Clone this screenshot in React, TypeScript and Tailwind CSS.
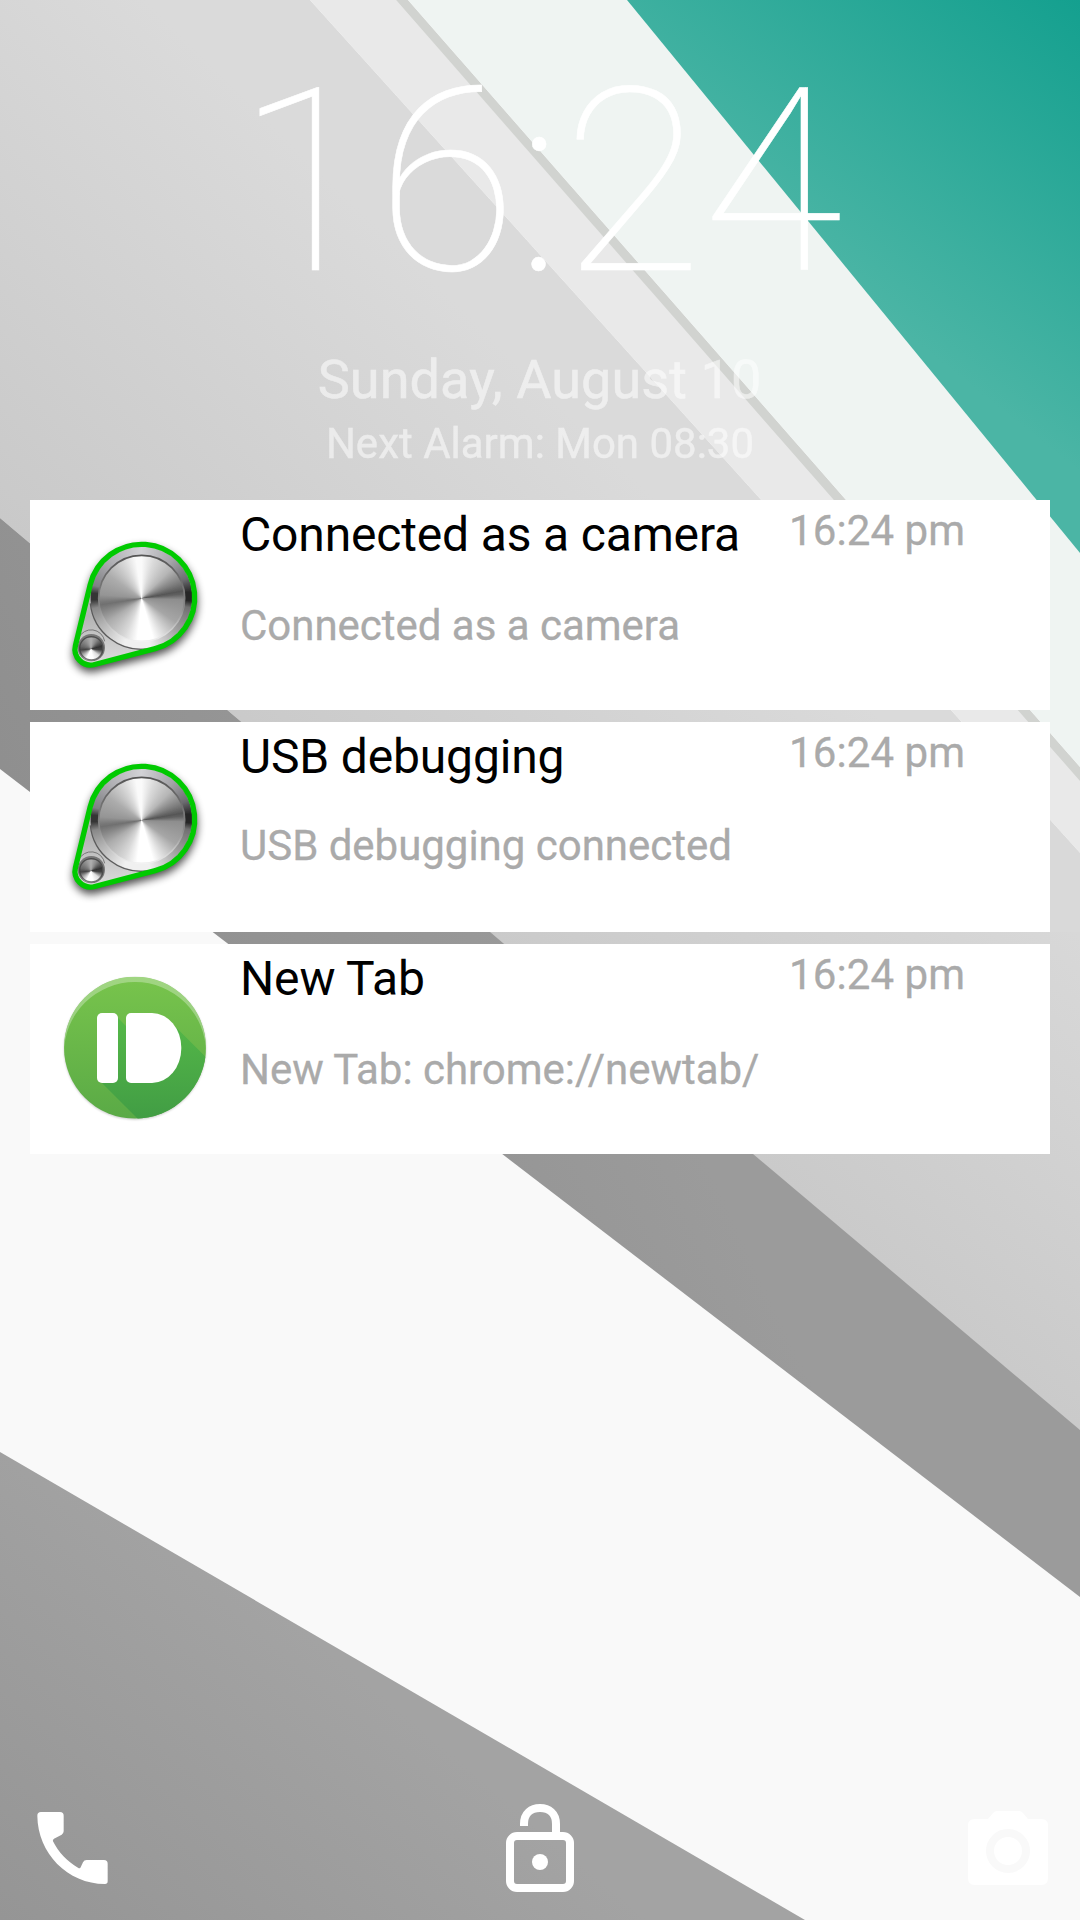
import React from "react";

function Wallpaper() {
  return (
    <svg className="absolute inset-0 h-[1920px] w-[1080px]" viewBox="0 0 1080 1920" aria-hidden="true">
      <defs>
        <linearGradient id="teal" gradientUnits="userSpaceOnUse" x1="1080" y1="0" x2="850" y2="290">
          <stop offset="0" stopColor="#14a08f" />
          <stop offset="1" stopColor="#4bb5a5" />
        </linearGradient>
        <linearGradient id="silver" gradientUnits="userSpaceOnUse" x1="0" y1="518" x2="330" y2="180">
          <stop offset="0" stopColor="#c9c9c9" />
          <stop offset="1" stopColor="#dadada" />
        </linearGradient>
        <linearGradient id="silverLow" gradientUnits="userSpaceOnUse" x1="700" y1="1110" x2="960" y2="800">
          <stop offset="0" stopColor="#cacaca" />
          <stop offset="1" stopColor="#d9d9d9" />
        </linearGradient>
        <linearGradient id="band" gradientUnits="userSpaceOnUse" x1="0" y1="760" x2="420" y2="560">
          <stop offset="0" stopColor="#8f8f8f" />
          <stop offset="1" stopColor="#9b9b9b" />
        </linearGradient>
        <linearGradient id="corner" gradientUnits="userSpaceOnUse" x1="0" y1="1920" x2="270" y2="1600">
          <stop offset="0" stopColor="#959595" />
          <stop offset="1" stopColor="#a3a3a3" />
        </linearGradient>
      </defs>
      <rect width="1080" height="1920" fill="#f9f9f9" />
      <polygon points="0,0 310,0 1080,853 1080,1430 0,518" fill="url(#silver)" />
      <polygon points="490,1100 1080,1100 1080,1430" fill="url(#silverLow)" />
      <polygon points="700,1100 490,932 1080,932 1080,1100" fill="url(#silverLow)" />
      <polygon points="1040,932 1040,809 1080,853 1080,932" fill="#d9d9d9" />
      <polygon points="310,0 396,0 1080,779 1080,853" fill="#e9e9e9" />
      <polygon points="396,0 408,0 1080,767 1080,781" fill="#d1d3d0" />
      <polygon points="408,0 627,0 1080,553 1080,767" fill="#eff4f2" />
      <polygon points="627,0 1080,0 1080,553" fill="url(#teal)" />
      <polygon points="0,518 1080,1430 1080,1597 0,769" fill="url(#band)" />
      <polygon points="0,1452 805,1920 0,1920" fill="url(#corner)" />
    </svg>
  );
}

const BELT = "M76.3 377 L120.5 194.6 A159 159 0 1 1 315.6 385.7 L134 433.4 A47 47 0 0 1 76.3 377 Z";

function KnobIcon({ id }: { id: string }) {
  return (
    <svg className="block size-[170px]" viewBox="0 0 510 510" aria-hidden="true">
      <defs>
        <filter id={`${id}-soft`} x="-20%" y="-20%" width="140%" height="140%">
          <feGaussianBlur stdDeviation="13" />
        </filter>
        <filter id={`${id}-edge`} x="-10%" y="-10%" width="120%" height="120%">
          <feGaussianBlur stdDeviation="2" />
        </filter>
        <linearGradient id={`${id}-plate`} x1="0" y1="0" x2="0" y2="1">
          <stop offset="0" stopColor="#c4c4c8" />
          <stop offset="0.6" stopColor="#b4b4b4" />
          <stop offset="1" stopColor="#dedede" />
        </linearGradient>
        <linearGradient id={`${id}-rim`} x1="0" y1="0" x2="0" y2="1">
          <stop offset="0" stopColor="#555" />
          <stop offset="0.6" stopColor="#888" />
          <stop offset="1" stopColor="#f2f2f2" />
        </linearGradient>
      </defs>
      <path d={BELT} transform="translate(1 14)" fill="#000" stroke="#000" strokeWidth="14" opacity="0.7" filter={`url(#${id}-soft)`} />
      <path d={BELT} fill={`url(#${id}-plate)`} />
      <g filter={`url(#${id}-edge)`}>
        <foreignObject x="121" y="79" width="306" height="306">
          <div className="size-[306px] rounded-full bg-[conic-gradient(#d2d2d6_0deg,#a4a4a8_40deg,#6c6c70_68deg,#262626_84deg,#262626_94deg,#707070_102deg,#a4a4a4_135deg,#f0f0f0_170deg,#f0f0f0_200deg,#b4b4b4_235deg,#888888_257deg,#363636_267deg,#363636_275deg,#808084_284deg,#b0b0b4_320deg,#d2d2d6_360deg)]" />
        </foreignObject>
        <path d="M121 250 A154 154 0 0 0 299 386" fill="none" stroke="#5c5c5c" strokeWidth="4" />
        <foreignObject x="145" y="105" width="260" height="260">
          <div className="size-[260px] rounded-full bg-[conic-gradient(#fafafa_0deg,#dadada_18deg,#b6b6b6_45deg,#808080_66deg,#565656_80deg,#606060_84deg,#8e8e8e_92deg,#a6a6a6_125deg,#dadada_148deg,#fff_164deg,#fff_186deg,#d8d8d8_205deg,#acacac_235deg,#707070_261deg,#787878_265deg,#959595_275deg,#acacac_305deg,#dadada_335deg,#fafafa_352deg,#fafafa_360deg)]" />
        </foreignObject>
        <circle cx="275" cy="235" r="129" fill="none" stroke={`url(#${id}-rim)`} strokeWidth="5" />
        <circle cx="124" cy="383" r="41" fill="#777" />
        <path d="M86 362 A41 41 0 0 1 164 372" fill="none" stroke="#777" strokeWidth="3" transform="translate(0 -8)" />
        <foreignObject x="88" y="352" width="70" height="70">
          <div className="size-[70px] rounded-full bg-[conic-gradient(#b0b0b0_0deg,#8a8a8a_30deg,#333_75deg,#444_95deg,#ddd_130deg,#fff_170deg,#fff_205deg,#aaa_235deg,#444_265deg,#666_285deg,#888_320deg,#b0b0b0_360deg)]" />
        </foreignObject>
        <circle cx="124" cy="385" r="35" fill="none" stroke="#3c3c3c" strokeWidth="4" opacity="0.7" />
        <path d={BELT} fill="none" stroke="#05ca05" strokeWidth="16" />
      </g>
    </svg>
  );
}

function BulletIcon() {
  return (
    <svg className="-mt-1 block size-[170px]" viewBox="0 0 510 510" aria-hidden="true">
      <defs>
        <linearGradient id="pb-face" x1="0" y1="0" x2="0" y2="1">
          <stop offset="0" stopColor="#78c44c" />
          <stop offset="1" stopColor="#5aaa46" />
        </linearGradient>
        <linearGradient id="pb-cast" x1="0" y1="0" x2="0" y2="1">
          <stop offset="0" stopColor="#55b848" />
          <stop offset="1" stopColor="#3f9a44" />
        </linearGradient>
        <clipPath id="pb-disc">
          <circle cx="255" cy="263" r="213" />
        </clipPath>
        <filter id="pb-soft" x="-10%" y="-10%" width="120%" height="120%">
          <feGaussianBlur stdDeviation="3" />
        </filter>
      </defs>
      <circle cx="255" cy="266" r="213" fill="#000" opacity="0.2" filter="url(#pb-soft)" />
      <g clipPath="url(#pb-disc)">
        <rect x="42" y="50" width="426" height="426" fill="url(#pb-face)" />
        <path d="M42 263 A213 213 0 0 1 468 263 L468 279 A213 213 0 0 0 42 279 Z" fill="#fff" opacity="0.3" />
        <path d="M146 359 L202 172 L230 200 L380 204 L510 334 L510 510 L297 510 Z" fill="url(#pb-cast)" />
      </g>
      <rect x="141" y="159" width="63" height="210" rx="15" fill="#fff" />
      <path d="M243 159 H306 A88 105 0 0 1 394 264 A88 105 0 0 1 306 369 H243 A15 15 0 0 1 228 354 V174 A15 15 0 0 1 243 159 Z" fill="#fff" />
    </svg>
  );
}

function PhoneIcon() {
  return (
    <svg className="h-[72px] w-[71px]" viewBox="111 96 213 216" fill="#fff" aria-hidden="true">
      <path d="M123 96 H180 Q191 96 191 107 V154 Q191 160 185 164 L162 176 Q157 179 159 184 C174 215 203 246 234 263 Q240 267 242 262 L249 247 Q252 240 260 240 H312 Q323 240 323 251 V304 Q323 312 315 312 C203 311 113 220 112 107 Q112 96 123 96 Z" />
    </svg>
  );
}

function UnlockIcon() {
  return (
    <svg className="h-[88px] w-[68px]" viewBox="78 72 204 264" aria-hidden="true">
      <path d="M132 138 V132 C132 99 154 84 180 84 C206 84 228 99 228 132 V160" fill="none" stroke="#fff" strokeWidth="24" />
      <rect x="90" y="168" width="180" height="156" rx="21" fill="none" stroke="#fff" strokeWidth="24" />
      <circle cx="180" cy="246" r="24" fill="#fff" />
    </svg>
  );
}

function CameraIcon() {
  return (
    <svg className="h-[74px] w-[80px]" viewBox="84 94 240 222" aria-hidden="true">
      <path d="M170 94 H238 Q244 94 248 99 L264 118 H304 Q324 118 324 138 V296 Q324 316 304 316 H104 Q84 316 84 296 V138 Q84 118 104 118 H144 L160 99 Q164 94 170 94 Z" fill="#fff" />
      <circle cx="204" cy="214" r="54" fill="none" stroke="#f9f9f9" strokeWidth="24" />
    </svg>
  );
}

type Notice = { icon: React.ReactNode; title: string; detail: string; time: string; tight?: boolean };

const notices: Notice[] = [
  { icon: <KnobIcon id="knob-a" />, title: "Connected as a camera", detail: "Connected as a camera", time: "16:24 pm" },
  { icon: <KnobIcon id="knob-b" />, title: "USB debugging", detail: "USB debugging connected", time: "16:24 pm", tight: true },
  { icon: <BulletIcon />, title: "New Tab", detail: "New Tab: chrome://newtab/", time: "16:24 pm" },
];

function NoticeCard({ icon, title, detail, time, tight }: Notice) {
  return (
    <article className="flex h-[210px] bg-white pl-5">
      <div className="w-[190px] shrink-0 pt-5">{icon}</div>
      <div className="flex w-[549px] flex-col pt-[7px]">
        <h2 className="text-[48px] leading-[56px] tracking-[-0.16px] whitespace-nowrap text-black">{title}</h2>
        <p className={`${tight ? "mt-[37px]" : "mt-[39px]"} text-[42px] leading-[48px] tracking-[-0.02px] whitespace-nowrap text-[#aaaaaa] [-webkit-text-stroke:0.3px_#aaaaaa]`}>{detail}</p>
      </div>
      <time className="pt-[7px] text-[42px] leading-[48px] tracking-[0.1px] whitespace-nowrap text-[#aaaaaa] [-webkit-text-stroke:0.3px_#aaaaaa]">{time}</time>
    </article>
  );
}

export default function App() {
  return (
    <main className="relative h-[1920px] w-[1080px] overflow-hidden font-['Roboto',sans-serif]">
      <Wallpaper />
      <div className="relative flex h-full flex-col">
        <header className="flex h-[500px] flex-col items-center pt-[33px] text-white">
          <h1 className="mr-px text-[256px] leading-[300px] font-thin [-webkit-text-stroke:0.5px_#fff]">16:24</h1>
          <p className="mt-[15px] mr-px text-[54px] leading-[64px] tracking-[0.08px] opacity-55 [-webkit-text-stroke:0.5px_#fff]">Sunday, August 10</p>
          <p className="mt-[8px] text-[42px] leading-[48px] opacity-55 [-webkit-text-stroke:0.4px_#fff]">Next Alarm: Mon 08:30</p>
        </header>
        <section className="flex flex-col gap-3 px-[30px]">
          {notices.map((n) => (
            <NoticeCard key={n.title} {...n} />
          ))}
        </section>
        <footer className="mt-auto grid grid-cols-3 items-end pr-8 pb-[28px] pl-8">
          <div className="pb-2 pl-[5px]">
            <PhoneIcon />
          </div>
          <div className="justify-self-center">
            <UnlockIcon />
          </div>
          <div className="justify-self-end pb-[7px]">
            <CameraIcon />
          </div>
        </footer>
      </div>
    </main>
  );
}
